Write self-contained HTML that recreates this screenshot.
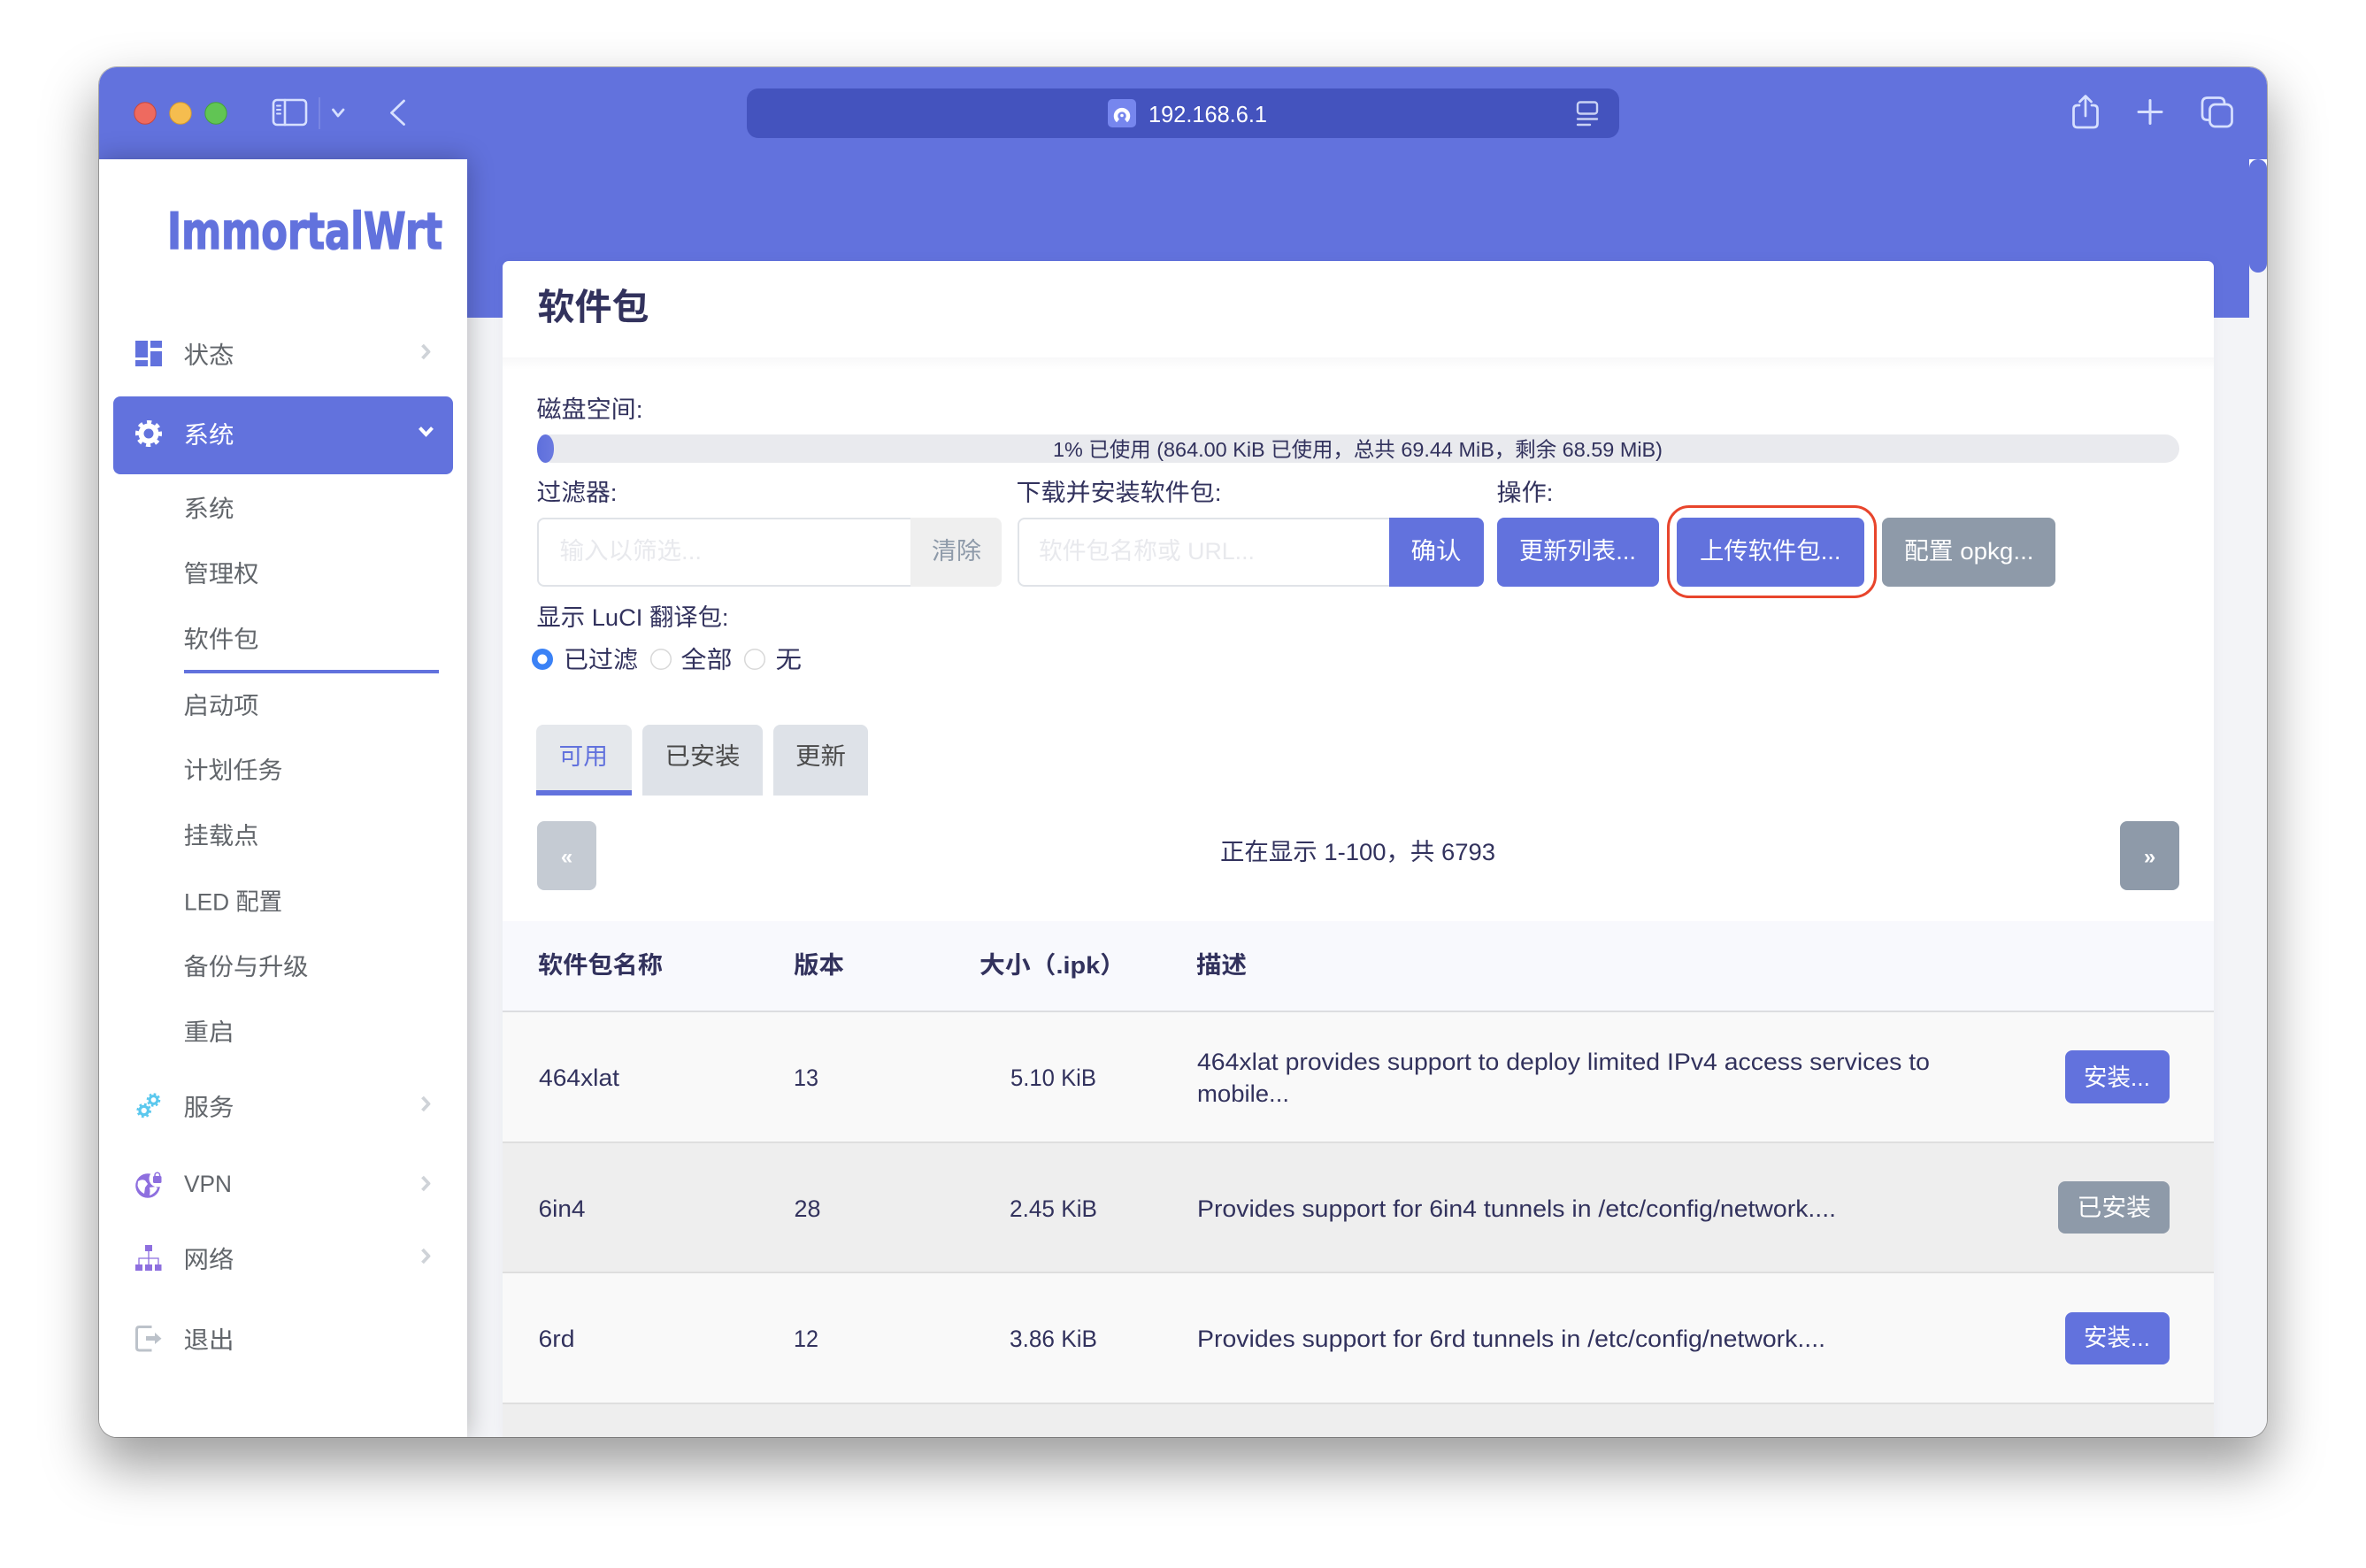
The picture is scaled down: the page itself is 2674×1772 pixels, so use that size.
<!DOCTYPE html>
<html lang="zh-CN">
<head>
<meta charset="utf-8">
<title>软件包 - ImmortalWrt</title>
<style>
html,body{margin:0;padding:0;background:#fff;width:2674px;height:1772px;overflow:hidden}
body{position:relative;font-family:"Liberation Sans","Noto Sans CJK SC",sans-serif}
.b{position:absolute;box-sizing:border-box}
#win{position:absolute;left:112px;top:76px;width:2450px;height:1548px;border-radius:20px;
 box-shadow:0 0 0 1px rgba(0,0,0,.27),0 30px 60px 4px rgba(0,0,0,.38)}
#clip{position:absolute;inset:0;border-radius:20px;overflow:hidden;background:#f3f4f7}
#in{position:absolute;left:-112px;top:-76px;width:2674px;height:1772px}
.btn{background:#6272dd;border-radius:8px}
.gry{background:#8e9aa9;border-radius:8px}
svg#t{position:absolute;left:0;top:0}
svg text{font-family:"Liberation Sans","Noto Sans CJK SC",sans-serif;font-size:27px;white-space:pre}
.m{fill:#32325d}.s{fill:#62666b}.w{fill:#fff}.B{font-weight:700}
.ph{fill:#e8e9ed}.hd{font-weight:700;fill:#32325d}
</style>
</head>
<body>
<div id="win"><div id="clip"><div id="in">
  <!-- toolbar + header -->
  <div class="b" style="left:112px;top:76px;width:2450px;height:104px;background:#6272dd"></div>
  <div class="b" style="left:528px;top:180px;width:2014px;height:179px;background:#6272dd"></div>
  <div class="b" style="left:844px;top:100px;width:986px;height:56px;background:#4453be;border-radius:13px"></div>
  <!-- scrollbar -->
  <div class="b" style="left:2542px;top:180px;width:20px;height:20px;background:#fff"></div>
  <div class="b" style="left:2542px;top:180px;width:20px;height:128px;background:#6272dd;border-radius:10px"></div>
  <!-- card -->
  <div class="b" style="left:568px;top:295px;width:1934px;height:1329px;background:#fff;border-radius:7px 7px 0 0;box-shadow:0 0 14px rgba(50,50,93,.05)"></div>
  <div class="b" style="left:568px;top:404px;width:1934px;height:14px;background:linear-gradient(#f8f8f9,#fff)"></div>
  <!-- progress -->
  <div class="b" style="left:607px;top:491px;width:1856px;height:32px;background:#e9eaee;border-radius:16px"></div>
  <div class="b" style="left:607px;top:491px;width:19px;height:32px;background:linear-gradient(90deg,#5e6fdc,#6b7ae0);border-radius:10px/16px"></div>
  <!-- filter input -->
  <div class="b" style="left:607px;top:585px;width:423px;height:78px;background:#fff;border:2px solid #e0e3e8;border-right:0;border-radius:8px 0 0 8px"></div>
  <div class="b" style="left:1029px;top:585px;width:103px;height:78px;background:#efefef;border-radius:0 8px 8px 0"></div>
  <!-- url input -->
  <div class="b" style="left:1150px;top:585px;width:421px;height:78px;background:#fff;border:2px solid #e0e3e8;border-right:0;border-radius:8px 0 0 8px"></div>
  <div class="b btn" style="left:1570px;top:585px;width:107px;height:78px;border-radius:0 8px 8px 0"></div>
  <!-- actions -->
  <div class="b btn" style="left:1692px;top:585px;width:183px;height:78px"></div>
  <div class="b btn" style="left:1895px;top:585px;width:212px;height:78px"></div>
  <div class="b gry" style="left:2127px;top:585px;width:196px;height:78px"></div>
  <div class="b" style="left:1884px;top:571px;width:237px;height:105px;border:3.5px solid #e8452c;border-radius:25px"></div>
  <!-- tabs -->
  <div class="b" style="left:606px;top:819px;width:108px;height:80px;background:#e5e8ec;border-radius:8px 8px 0 0;border-bottom:6px solid #6272dd"></div>
  <div class="b" style="left:726px;top:819px;width:136px;height:80px;background:#dee2e8;border-radius:8px 8px 0 0"></div>
  <div class="b" style="left:874px;top:819px;width:107px;height:80px;background:#dee2e8;border-radius:8px 8px 0 0"></div>
  <!-- pager -->
  <div class="b" style="left:607px;top:928px;width:67px;height:78px;background:#c5cbd3;border-radius:8px"></div>
  <div class="b gry" style="left:2396px;top:928px;width:67px;height:78px"></div>
  <!-- table -->
  <div class="b" style="left:568px;top:1041px;width:1934px;height:101px;background:#f8f9fd"></div>
  <div class="b" style="left:568px;top:1142px;width:1934px;height:2px;background:#dcdde0"></div>
  <div class="b" style="left:568px;top:1144px;width:1934px;height:146px;background:#f9f9f9"></div>
  <div class="b" style="left:568px;top:1290px;width:1934px;height:2px;background:#dedede"></div>
  <div class="b" style="left:568px;top:1292px;width:1934px;height:145px;background:#eee"></div>
  <div class="b" style="left:568px;top:1437px;width:1934px;height:2px;background:#dedede"></div>
  <div class="b" style="left:568px;top:1439px;width:1934px;height:146px;background:#f9f9f9"></div>
  <div class="b" style="left:568px;top:1585px;width:1934px;height:2px;background:#dedede"></div>
  <div class="b" style="left:568px;top:1587px;width:1934px;height:37px;background:#eee"></div>
  <div class="b btn" style="left:2334px;top:1187px;width:118px;height:60px"></div>
  <div class="b gry" style="left:2326px;top:1335px;width:126px;height:59px"></div>
  <div class="b btn" style="left:2334px;top:1483px;width:118px;height:59px"></div>
  <!-- sidebar -->
  <div class="b" style="left:112px;top:180px;width:416px;height:1444px;background:#fff;box-shadow:0 0 28px rgba(0,0,0,.28)"></div>
  <div class="b btn" style="left:128px;top:448px;width:384px;height:88px"></div>
  <div class="b" style="left:208px;top:757px;width:288px;height:4px;background:#6272dd"></div>
</div></div></div>

<svg id="t" width="2674" height="1772" viewBox="0 0 2674 1772" xmlns="http://www.w3.org/2000/svg">
  <!-- traffic lights -->
  <circle cx="164" cy="128" r="12.2" fill="#ee6a5f" stroke="#c9473e" stroke-width="1"/>
  <circle cx="204" cy="128" r="12.2" fill="#f5bd4f" stroke="#d49a2f" stroke-width="1"/>
  <circle cx="244" cy="128" r="12.2" fill="#61c554" stroke="#45a33a" stroke-width="1"/>
  <!-- toolbar left -->
  <g fill="none" stroke="#d7e0ff" stroke-width="2.6" stroke-linecap="round" stroke-linejoin="round">
    <rect x="309" y="113" width="37" height="28" rx="4"/>
    <path d="M322 113V141"/>
    <path d="M313 119.500H317M313 124H317M313 128.500H317" stroke-width="2"/>
    <path d="M376.500 124L382 131L388 124" stroke-width="2.800"/>
    <path d="M456.500 114L442.500 127.500L456.500 140.500" stroke-width="2.800"/>
  </g>
  <path d="M361 110V146" stroke="#fff" stroke-opacity=".2" stroke-width="1.500"/>
  <!-- address bar -->
  <rect x="1252" y="112" width="32" height="32" rx="5" fill="#7686ee"/>
  <path d="M1263.500 136.500A7 7 0 1 1 1272.500 136.500" fill="none" stroke="#fff" stroke-width="4.500"/>
  <circle cx="1268" cy="130.500" r="1.800" fill="#fff"/>
  <text x="1298" y="138" textLength="134" lengthAdjust="spacingAndGlyphs" class="w" style="font-size:26px">192.168.6.1</text>
  <g fill="none" stroke="#c9d1f4" stroke-width="2.400" stroke-linecap="round">
    <rect x="1783" y="115.500" width="22" height="13" rx="3"/>
    <path d="M1783 134.500H1805M1783 141H1797"/>
  </g>
  <!-- toolbar right -->
  <g fill="none" stroke="#d7e0ff" stroke-width="2.700" stroke-linecap="round" stroke-linejoin="round">
    <path d="M2350 119H2348Q2343.500 119 2343.500 123.500V139.500Q2343.500 144 2348 144H2366Q2370.500 144 2370.500 139.500V123.500Q2370.500 119 2366 119H2364"/>
    <path d="M2357 131V109M2350.500 115L2357 108.500L2363.500 115"/>
    <path d="M2417 126.500H2443M2430 113.500V139.500" stroke-width="3"/>
    <rect x="2497.500" y="118" width="25" height="25" rx="6"/>
    <path d="M2497 135.500H2494.500Q2489 135.500 2489 130V116.500Q2489 110.500 2495 110.500H2508Q2514 110.500 2514 116.500V117.500"/>
  </g>

  <!-- logo -->
  <text x="189" y="281" textLength="311" lengthAdjust="spacingAndGlyphs" style="font-family:'DejaVu Sans','Liberation Sans',sans-serif;font-size:57px;font-weight:700;fill:#6272dd;stroke:#6272dd;stroke-width:1.500">ImmortalWrt</text>

  <!-- sidebar icons -->
  <g fill="#6272dd">
    <rect x="153" y="385" width="14" height="19"/>
    <rect x="153" y="407" width="14" height="7"/>
    <rect x="170" y="385" width="13" height="8"/>
    <rect x="170" y="397" width="13" height="17"/>
  </g>
  <g fill="none" stroke="#fff">
    <circle cx="168" cy="490" r="8.500" stroke-width="6"/>
    <circle cx="168" cy="490" r="12.800" stroke-width="4.500" stroke-dasharray="5 5.050" transform="rotate(-10 168 490)"/>
  </g>
  <g fill="none" stroke="#5bc8ee">
    <circle cx="162.700" cy="1255" r="4.700" stroke-width="3.200"/>
    <circle cx="162.700" cy="1255" r="7" stroke-width="2.600" stroke-dasharray="2.700 2.800"/>
    <circle cx="173.500" cy="1243" r="4.400" stroke-width="3"/>
    <circle cx="173.500" cy="1243" r="6.600" stroke-width="2.400" stroke-dasharray="2.600 2.580"/>
  </g>
  <circle cx="167" cy="1340" r="13.800" fill="#8e6fdf"/>
  <circle cx="178" cy="1332" r="9.500" fill="#fff"/>
  <path d="M156 1335Q160 1332 164 1334L167 1338L164 1342L163 1349Q157 1346 155.500 1340ZM169 1342L176 1341L178 1343Q175 1349 169 1351Q170 1346 169 1342Z" fill="#fff"/>
  <rect x="173" y="1329" width="9.500" height="8" rx="1.500" fill="#8e6fdf"/>
  <path d="M175 1329.500V1328A2.800 2.800 0 0 1 180.600 1328V1329.500" fill="none" stroke="#8e6fdf" stroke-width="1.500"/>
  <g fill="#8e6fdf">
    <rect x="164" y="1407" width="8" height="7"/>
    <rect x="153" y="1429" width="8" height="7"/>
    <rect x="164" y="1429" width="8" height="7"/>
    <rect x="175" y="1429" width="7.500" height="7"/>
  </g>
  <path d="M168 1414V1429M157 1429V1422H179V1429" fill="none" stroke="#8e6fdf" stroke-width="1.300"/>
  <path d="M171.500 1499.500H157.500Q154.500 1499.500 154.500 1502.500V1523Q154.500 1526 157.500 1526H171.500" fill="none" stroke="#bcc2ca" stroke-width="3"/>
  <path d="M165 1510H175V1506L182.500 1512.700L175 1519V1515H165Z" fill="#bcc2ca"/>
  <g fill="none" stroke="#cfd3d8" stroke-width="3.800" stroke-linejoin="round">
    <path d="M477.500 390L484.500 397.500L477.500 405"/>
    <path d="M477.500 1240L484.500 1247.500L477.500 1255"/>
    <path d="M477.500 1330L484.500 1337.500L477.500 1345"/>
    <path d="M477.500 1412L484.500 1419.500L477.500 1427"/>
  </g>
  <path d="M474.500 483.500L481.500 491L488.500 483.500" fill="none" stroke="#fff" stroke-width="4"/>

  <!-- sidebar text -->
  <text x="207.500" y="411" textLength="57" lengthAdjust="spacingAndGlyphs" class="s">状态</text>
  <text x="207.500" y="501" textLength="57" lengthAdjust="spacingAndGlyphs" class="w">系统</text>
  <text x="207.500" y="584.500" textLength="57" lengthAdjust="spacingAndGlyphs" class="s">系统</text>
  <text x="207.500" y="658" textLength="85" lengthAdjust="spacingAndGlyphs" class="s">管理权</text>
  <text x="207.500" y="732" textLength="85" lengthAdjust="spacingAndGlyphs" class="s">软件包</text>
  <text x="207.500" y="807" textLength="85" lengthAdjust="spacingAndGlyphs" class="s">启动项</text>
  <text x="207.500" y="880" textLength="112" lengthAdjust="spacingAndGlyphs" class="s">计划任务</text>
  <text x="207.500" y="954" textLength="85" lengthAdjust="spacingAndGlyphs" class="s">挂载点</text>
  <text x="208" y="1028.500" textLength="111" lengthAdjust="spacingAndGlyphs" class="s">LED 配置</text>
  <text x="207.500" y="1102" textLength="141" lengthAdjust="spacingAndGlyphs" class="s">备份与升级</text>
  <text x="207.500" y="1176" textLength="57" lengthAdjust="spacingAndGlyphs" class="s">重启</text>
  <text x="207.500" y="1261" textLength="57" lengthAdjust="spacingAndGlyphs" class="s">服务</text>
  <text x="208" y="1347" textLength="54" lengthAdjust="spacingAndGlyphs" class="s">VPN</text>
  <text x="207.500" y="1433" textLength="57" lengthAdjust="spacingAndGlyphs" class="s">网络</text>
  <text x="207.500" y="1524" textLength="57" lengthAdjust="spacingAndGlyphs" class="s">退出</text>

  <!-- card head -->
  <text x="607.500" y="361" textLength="126" lengthAdjust="spacingAndGlyphs" class="m B" style="font-size:41px">软件包</text>
  <text x="606.500" y="472" textLength="120" lengthAdjust="spacingAndGlyphs" class="m">磁盘空间:</text>
  <text x="1190" y="516" textLength="689" lengthAdjust="spacingAndGlyphs" class="m" style="font-size:23.500px">1% 已使用 (864.00 KiB 已使用，总共 69.44 MiB，剩余 68.59 MiB)</text>
  <text x="606.500" y="566" textLength="91" lengthAdjust="spacingAndGlyphs" class="m">过滤器:</text>
  <text x="1148.500" y="566" textLength="232" lengthAdjust="spacingAndGlyphs" class="m">下载并安装软件包:</text>
  <text x="1691.500" y="566" textLength="64" lengthAdjust="spacingAndGlyphs" class="m">操作:</text>
  <text x="632.500" y="632" textLength="160.500" lengthAdjust="spacingAndGlyphs" class="ph">输入以筛选...</text>
  <text x="1053" y="632" textLength="56" lengthAdjust="spacingAndGlyphs" style="fill:#8e9aa9">清除</text>
  <text x="1174" y="632" textLength="244" lengthAdjust="spacingAndGlyphs" class="ph">软件包名称或 URL...</text>
  <text x="1594.500" y="632" textLength="57" lengthAdjust="spacingAndGlyphs" class="w">确认</text>
  <text x="1717" y="632" textLength="132" lengthAdjust="spacingAndGlyphs" class="w">更新列表...</text>
  <text x="1921" y="632" textLength="159.500" lengthAdjust="spacingAndGlyphs" class="w">上传软件包...</text>
  <text x="2152" y="632" textLength="146.500" lengthAdjust="spacingAndGlyphs" class="w">配置 opkg...</text>
  <text x="606.500" y="707" textLength="217" lengthAdjust="spacingAndGlyphs" class="m">显示 LuCI 翻译包:</text>

  <!-- radios -->
  <circle cx="613" cy="745" r="12" fill="#3b82f6"/>
  <circle cx="613" cy="745" r="5.500" fill="#fff"/>
  <circle cx="747" cy="745" r="11.300" fill="#fff" stroke="#d8d8d8" stroke-width="1.500"/>
  <circle cx="853" cy="745" r="11.300" fill="#fff" stroke="#d8d8d8" stroke-width="1.500"/>
  <text x="637" y="755" textLength="84" lengthAdjust="spacingAndGlyphs" class="m">已过滤</text>
  <text x="769.500" y="755" textLength="58" lengthAdjust="spacingAndGlyphs" class="m">全部</text>
  <text x="876.500" y="755" textLength="29.500" lengthAdjust="spacingAndGlyphs" class="m">无</text>

  <!-- tabs -->
  <text x="631.500" y="864" textLength="55.500" lengthAdjust="spacingAndGlyphs" style="fill:#6272dd">可用</text>
  <text x="751.500" y="864" textLength="85" lengthAdjust="spacingAndGlyphs" style="fill:#4a4a4a">已安装</text>
  <text x="899" y="864" textLength="57" lengthAdjust="spacingAndGlyphs" style="fill:#4a4a4a">更新</text>

  <!-- pager -->
  <text x="640.500" y="976" text-anchor="middle" class="w B" style="font-size:24px">«</text>
  <text x="2429.500" y="976" text-anchor="middle" class="w B" style="font-size:24px">»</text>
  <text x="1379" y="972" textLength="311" lengthAdjust="spacingAndGlyphs" class="m">正在显示 1-100，共 6793</text>

  <!-- table head -->
  <text x="608" y="1100" textLength="141" lengthAdjust="spacingAndGlyphs" class="hd">软件包名称</text>
  <text x="897" y="1100" textLength="57" lengthAdjust="spacingAndGlyphs" class="hd">版本</text>
  <text x="1107" y="1100" textLength="165" lengthAdjust="spacingAndGlyphs" class="hd">大小（.ipk）</text>
  <text x="1352" y="1100" textLength="57" lengthAdjust="spacingAndGlyphs" class="hd">描述</text>

  <!-- rows -->
  <text x="609" y="1227" textLength="91" lengthAdjust="spacingAndGlyphs" class="m">464xlat</text>
  <text x="897" y="1227" textLength="28" lengthAdjust="spacingAndGlyphs" class="m">13</text>
  <text x="1142" y="1227" textLength="97" lengthAdjust="spacingAndGlyphs" class="m">5.10 KiB</text>
  <text x="1353" y="1209" textLength="828" lengthAdjust="spacingAndGlyphs" class="m">464xlat provides support to deploy limited IPv4 access services to</text>
  <text x="1353" y="1245" textLength="104" lengthAdjust="spacingAndGlyphs" class="m">mobile...</text>
  <text x="2355" y="1227" textLength="75" lengthAdjust="spacingAndGlyphs" class="w">安装...</text>

  <text x="608.500" y="1375" textLength="53" lengthAdjust="spacingAndGlyphs" class="m">6in4</text>
  <text x="897.500" y="1375" textLength="30" lengthAdjust="spacingAndGlyphs" class="m">28</text>
  <text x="1141" y="1375" textLength="99" lengthAdjust="spacingAndGlyphs" class="m">2.45 KiB</text>
  <text x="1353" y="1375" textLength="722" lengthAdjust="spacingAndGlyphs" class="m">Provides support for 6in4 tunnels in /etc/config/network....</text>
  <text x="2347.500" y="1374" textLength="83.500" lengthAdjust="spacingAndGlyphs" class="w">已安装</text>

  <text x="608.500" y="1522" textLength="41" lengthAdjust="spacingAndGlyphs" class="m">6rd</text>
  <text x="897" y="1522" textLength="28" lengthAdjust="spacingAndGlyphs" class="m">12</text>
  <text x="1141" y="1522" textLength="99" lengthAdjust="spacingAndGlyphs" class="m">3.86 KiB</text>
  <text x="1353" y="1522" textLength="710" lengthAdjust="spacingAndGlyphs" class="m">Provides support for 6rd tunnels in /etc/config/network....</text>
  <text x="2355" y="1521" textLength="75" lengthAdjust="spacingAndGlyphs" class="w">安装...</text>
</svg>
</body>
</html>
